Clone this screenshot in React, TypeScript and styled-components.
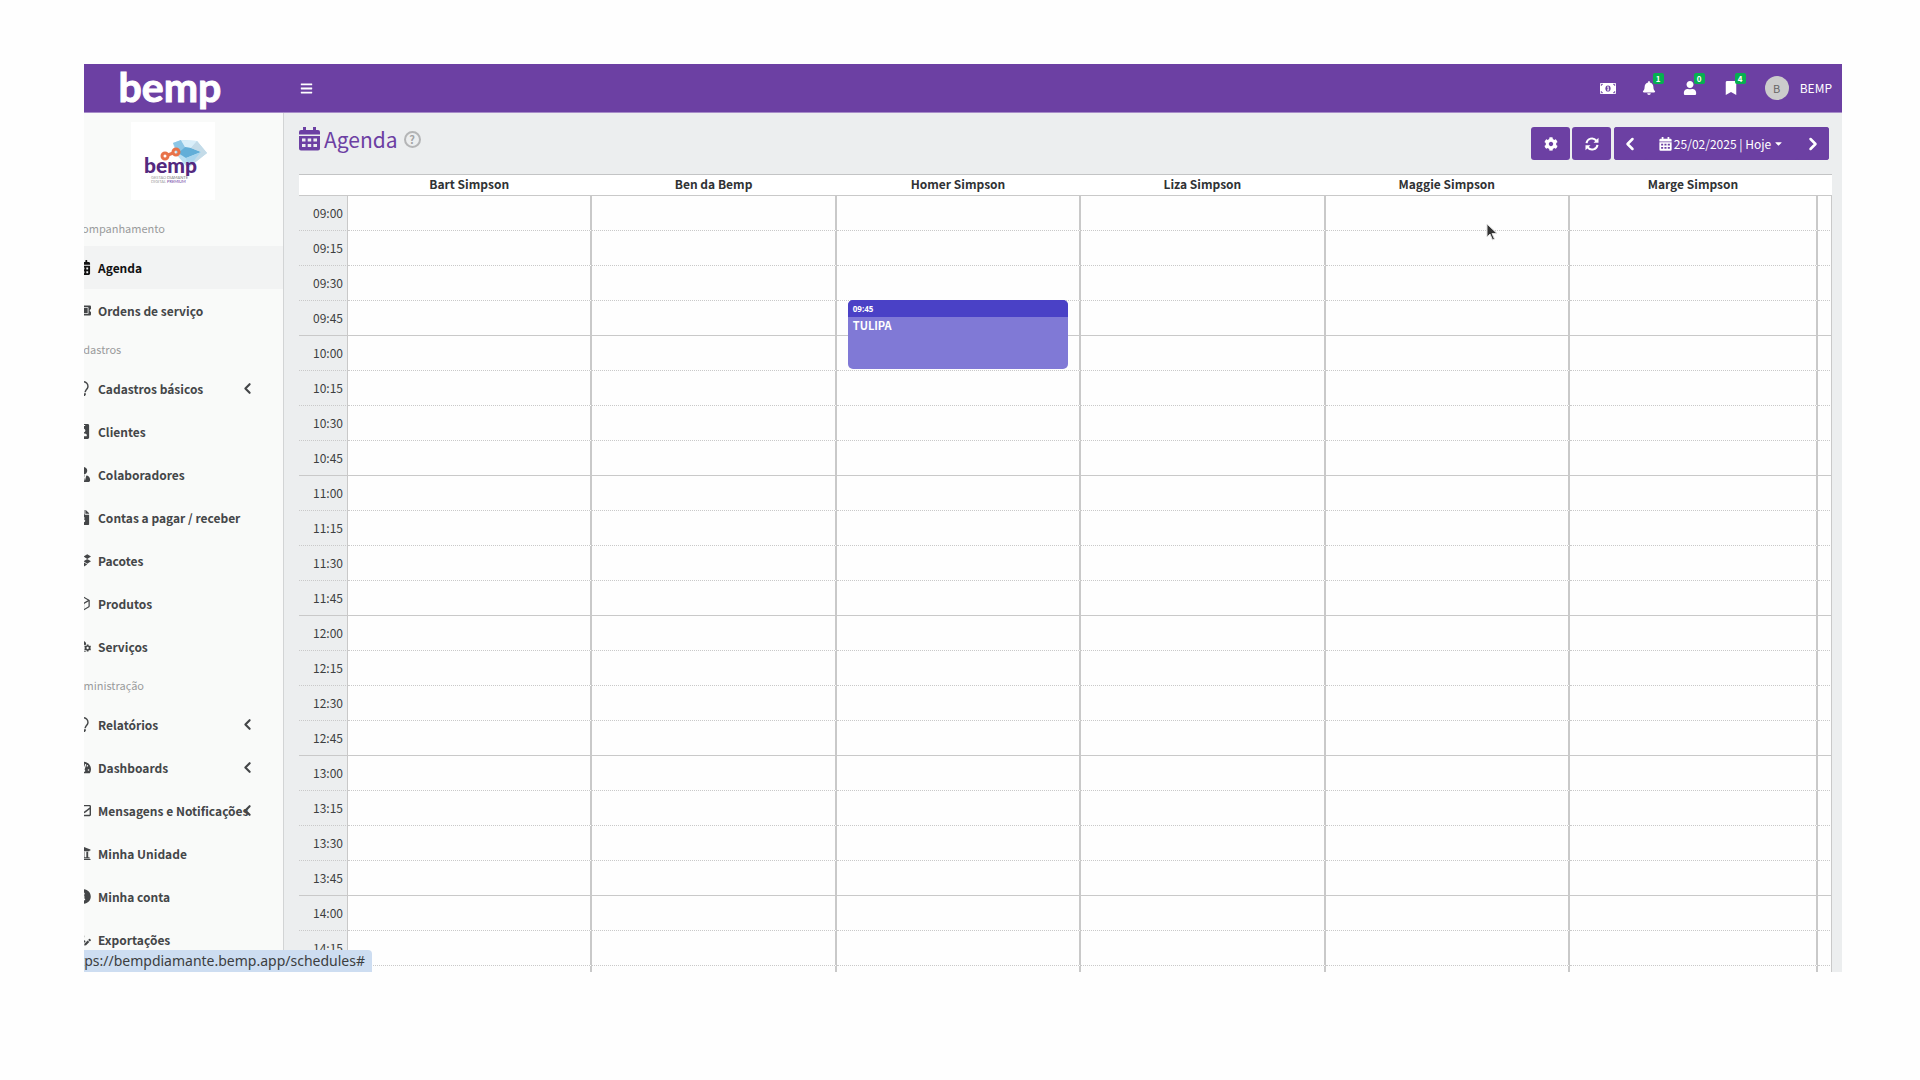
import React from "react";
import styled, { createGlobalStyle } from "styled-components";
import type { IconType } from "react-icons";
import {
  FaBars,
  FaBell,
  FaBookmark,
  FaCalendarAlt,
  FaCaretDown,
  FaCog,
  FaDropbox,
  FaFileInvoiceDollar,
  FaIdBadge,
  FaInfoCircle,
  FaRegEnvelope,
  FaRegLightbulb,
  FaTachometerAlt,
  FaTicketAlt,
  FaUniversity,
  FaUser,
  FaUserEdit,
  FaUserTie,
  FaUsersCog,
} from "react-icons/fa";
import { FiBox } from "react-icons/fi";
import { ChevronLeft, ChevronRight } from "lucide-react";

const purple = "#6c40a3";
const line = "#c9c9c9";
const surface = "#eceeef";

const GlobalStyle = createGlobalStyle`
  *, *::before, *::after { box-sizing: border-box; }
  body {
    margin: 0;
    background: #fefefe;
    color: #3c3e40;
    font-family: "Noto Sans CJK JP", "Noto Sans", sans-serif;
    font-size: 12px;
    line-height: 20px;
  }
  button {
    border: 0;
    padding: 0;
    background: none;
    color: inherit;
    font: inherit;
    cursor: pointer;
  }
  a { color: inherit; text-decoration: none; }
  ul { list-style: none; margin: 0; padding: 0; }
  svg { display: block; flex: none; }
`;

const Screen = styled.div`
  height: 100vh;
  padding: 64px 78px 108px 84px;
`;

const Window = styled.div`
  position: relative;
  display: flex;
  flex-direction: column;
  height: 100%;
  overflow: hidden;
`;

const TopBar = styled.header`
  display: flex;
  flex: none;
  align-items: center;
  height: 49px;
  padding-right: 10px;
  background: ${purple};
  border-bottom: 1px solid #a78cc9;
  color: #fff;
`;

const Brand = styled.a`
  width: 200px;
  padding: 0 28px 2px 0;
  text-align: center;
  font-family: Lato, sans-serif;
  font-weight: 700;
  font-size: 41px;
  line-height: 46px;
  -webkit-text-stroke: 1px #fff;
`;

const IconButton = styled.button`
  position: relative;
  display: flex;
  align-items: center;
  justify-content: center;
  width: 41px;
  height: 48px;
`;

const MenuButton = styled(IconButton)`
  width: 44px;
  margin-right: auto;
`;

const Badge = styled.span`
  position: absolute;
  top: 9px;
  right: 6px;
  min-width: 11px;
  height: 11px;
  border-radius: 2px;
  background: #06b050;
  font-weight: 700;
  font-size: 8px;
  line-height: 11px;
  text-align: center;
`;

const Account = styled.button`
  display: flex;
  align-items: center;
  gap: 11px;
  margin-left: 13px;
`;

const Avatar = styled.span`
  width: 24px;
  height: 24px;
  border-radius: 50%;
  background: #ccc;
  color: #666;
  font-size: 11px;
  line-height: 24px;
`;

const Body = styled.div`
  display: flex;
  flex: 1;
  min-height: 0;
`;

const Sidebar = styled.aside`
  flex: none;
  width: 200px;
  overflow: hidden;
  background: #f9faf9;
  border-right: 1px solid #d2d4d5;
`;

const LogoCard = styled.div`
  width: 84px;
  height: 78px;
  margin: 9px auto 11px 47px;
  background: #fff;
`;

const Nav = styled.nav`
  margin-left: -19px;
`;

const NavHeading = styled.h2`
  margin: 0;
  padding-left: 5px;
  color: #999b9c;
  font-weight: 400;
  font-size: 11px;
  line-height: 35px;
`;

const NavLink = styled.a<{ $active?: boolean }>`
  position: relative;
  display: flex;
  align-items: center;
  gap: 5px;
  height: 43px;
  padding-left: 8px;
  background: ${(p) => (p.$active ? "#f2f3f3" : "transparent")};
  color: ${(p) => (p.$active ? "#111" : "#444648")};
  font-weight: 700;
  white-space: nowrap;
`;

const NavIcon = styled.span`
  display: flex;
  justify-content: center;
  width: 20px;

  svg {
    width: auto;
    height: 15px;
  }
`;

const NavArrow = styled.span`
  position: absolute;
  right: 27px;
`;

const Main = styled.main`
  flex: 1;
  min-width: 0;
  overflow: hidden;
  padding: 14px 10px 0 15px;
  background: ${surface};
`;

const Toolbar = styled.div`
  display: flex;
  align-items: flex-start;
  gap: 2px;
  height: 47px;
  padding-right: 3px;
`;

const Title = styled.h1`
  display: flex;
  align-items: center;
  gap: 4px;
  margin: 0 auto 0 0;
  color: ${purple};
  font-weight: 400;
  font-size: 21px;
  line-height: 24px;
`;

const Help = styled.button`
  width: 17px;
  height: 17px;
  margin-left: 2px;
  border: 2px solid #b4b5b6;
  border-radius: 50%;
  color: #a3a4a5;
  font-weight: 700;
  font-size: 11px;
  line-height: 13px;
`;

const ToolButton = styled.button`
  display: flex;
  align-items: center;
  justify-content: center;
  width: 39px;
  height: 33px;
  border-radius: 3px;
  background: ${purple};
  color: #fff;
`;

const DateGroup = styled.div`
  display: flex;
  margin-left: 1px;
  border-radius: 3px;
  background: ${purple};
`;

const DateStep = styled(ToolButton)`
  width: 32px;
`;

const DateButton = styled(ToolButton)`
  gap: 2px;
  width: 151px;
`;

const Calendar = styled.table`
  width: 100%;
  table-layout: fixed;
  border-collapse: separate;
  border-spacing: 0;
`;

const HeadCell = styled.th`
  height: 21px;
  padding: 0 2px 2px 0;
  border-top: 1px solid #c3c4c5;
  background: #fff;
  color: #303234;
  line-height: 18px;
`;

const SlotRow = styled.tr<{ $hour: boolean }>`
  & > * {
    height: 35px;
    padding: 0;
    border-top: 1px ${(p) => (p.$hour ? "solid" : "dotted")} ${line};
  }
`;

const TimeCell = styled.th`
  border-right: 1px solid ${line};
  font-weight: 400;
  text-align: right;

  && {
    padding-right: 4px;
  }
`;

const Slot = styled.td`
  position: relative;
  border-right: 2px solid ${line};
  background: #fefefe;

  &:last-child {
    border-right-width: 1px;
  }
`;

const Appointment = styled.button`
  position: absolute;
  top: -1px;
  left: 11px;
  right: 11px;
  z-index: 1;
  display: flex;
  flex-direction: column;
  height: 69px;
  overflow: hidden;
  border-radius: 5px;
  background: #8079d6;
  color: #fff;
  font-weight: 700;
  font-size: 11px;
  text-align: left;
`;

const AppointmentTime = styled.span`
  width: 100%;
  padding-left: 5px;
  background: #4a41c6;
  font-family: "Open Sans", sans-serif;
  font-size: 8px;
  line-height: 17px;
`;

const AppointmentName = styled.span`
  padding-left: 5px;
  line-height: 16px;
`;

const StatusBar = styled.div`
  position: absolute;
  bottom: 0;
  left: 0;
  z-index: 2;
  display: flex;
  justify-content: flex-end;
  width: 288px;
  overflow: hidden;
  padding-right: 7px;
  border-top-right-radius: 4px;
  background: #cdddf1;
  font-family: "Noto Sans", sans-serif;
  font-size: 14px;
  line-height: 22px;
`;

const Pointer = styled.svg`
  position: absolute;
  top: 159px;
  left: 1402px;
  z-index: 3;
`;

const DiamondLogo = () => (
  <svg width="84" height="78" viewBox="0 0 84 78" role="img" aria-label="bemp diamante">
    <path d="M42 21 50 18 66 19 76 31 57 46 45 32Z" fill="#b9dff2" />
    <path d="M42 21 50 18 54 25 47 31Z" fill="#8cc6e6" />
    <path d="M50 18 66 19 60 26 54 25Z" fill="#d9eef9" />
    <path d="M54 25 60 26 70 30 55 36 47 31Z" fill="#62aed8" />
    <path d="M55 36 70 30 57 46Z" fill="#a9d5ee" />
    <path d="M66 19 76 31 57 46 70 30 60 26Z" fill="#c4dbe8" />
    <g fill="none" stroke="#e8734a" strokeWidth="3">
      <circle cx="34" cy="34" r="3" />
      <circle cx="45" cy="30" r="3" />
      <path d="M37 33 42 31" />
    </g>
    <text x="13" y="51" fill="#54297f" fontFamily="Lato, sans-serif" fontWeight="900" fontSize="21">
      bemp
    </text>
    <g fontFamily="Lato, sans-serif" fontSize="4">
      <text x="20" y="57" fill="#999">GESTÃO</text>
      <text x="20" y="61" fill="#999">DIGITAL</text>
      <text x="36" y="57" fill="#777">DIAMANTE</text>
      <text x="36" y="61" fill="#6c40a3">PREMIUM</text>
    </g>
  </svg>
);

const MoneyIcon = () => (
  <svg width="16" height="11" viewBox="0 0 16 11">
    <rect width="16" height="11" rx="1" fill="#fff" />
    <ellipse cx="8" cy="5.5" rx="2.6" ry="3.1" fill={purple} />
    <path d="M7.2 4.2 8.2 3.7v3.2M7 7h2.2" stroke="#fff" fill="none" />
    <path d="M1.3 2.8V1.3h1.5M13.2 1.3h1.5v1.5M1.3 8.2v1.5h1.5M13.2 9.7h1.5V8.2" stroke={purple} fill="none" />
  </svg>
);

const CalendarIcon = ({ width, height }: { width: number; height: number }) => (
  <svg width={width} height={height} viewBox="0 0 21 24" fill="currentColor">
    <path
      fillRule="evenodd"
      d="M0 9h21v12.500a2 2 0 0 1-2 2H2a2 2 0 0 1-2-2ZM3 11.500v3h3.500v-3Zm5.700 0v3h3.500v-3Zm5.700 0v3H18v-3ZM3 17v3h3.500v-3Zm5.700 0v3h3.500v-3Zm5.700 0v3H18v-3Z"
    />
    <path d="M4 0h3v3h7V0h3v3h2a2 2 0 0 1 2 2v2.500H0V5a2 2 0 0 1 2-2h2Z" />
  </svg>
);

const RefreshIcon = () => (
  <svg width="14" height="14" viewBox="0 0 14 14" fill="none" stroke="currentColor" strokeWidth="2">
    <path d="M1.500 6.200A5.500 5.500 0 0 1 11.300 3.600M12.500 7.800A5.500 5.500 0 0 1 2.700 10.400" />
    <path d="M13.500.8v5h-5Z M.5 13.200v-5h5Z" fill="currentColor" stroke="none" />
  </svg>
);

type Item = { label: string; icon: IconType; active?: boolean; nested?: boolean };

const menu: { heading: string; items: Item[] }[] = [
  {
    heading: "Acompanhamento",
    items: [
      { label: "Agenda", icon: FaCalendarAlt, active: true },
      { label: "Ordens de serviço", icon: FaTicketAlt },
    ],
  },
  {
    heading: "Cadastros",
    items: [
      { label: "Cadastros básicos", icon: FaRegLightbulb, nested: true },
      { label: "Clientes", icon: FaIdBadge },
      { label: "Colaboradores", icon: FaUserTie },
      { label: "Contas a pagar / receber", icon: FaFileInvoiceDollar },
      { label: "Pacotes", icon: FaDropbox },
      { label: "Produtos", icon: FiBox },
      { label: "Serviços", icon: FaUsersCog },
    ],
  },
  {
    heading: "Administração",
    items: [
      { label: "Relatórios", icon: FaRegLightbulb, nested: true },
      { label: "Dashboards", icon: FaTachometerAlt, nested: true },
      { label: "Mensagens e Notificações", icon: FaRegEnvelope, nested: true },
      { label: "Minha Unidade", icon: FaUniversity },
      { label: "Minha conta", icon: FaInfoCircle },
      { label: "Exportações", icon: FaUserEdit },
    ],
  },
];

const alerts = [
  { label: "Notificações", icon: FaBell, count: 1 },
  { label: "Clientes", icon: FaUser, count: 0 },
  { label: "Marcadores", icon: FaBookmark, count: 4 },
];

const people = ["Bart Simpson", "Ben da Bemp", "Homer Simpson", "Liza Simpson", "Maggie Simpson", "Marge Simpson"];

const slots = Array.from({ length: 24 }, (_, i) => {
  const minutes = 9 * 60 + i * 15;
  return `${String(Math.floor(minutes / 60)).padStart(2, "0")}:${String(minutes % 60).padStart(2, "0")}`;
});

const appointments = [{ time: "09:45", person: "Homer Simpson", name: "TULIPA" }];

export default function App() {
  return (
    <Screen>
      <GlobalStyle />
      <Window>
        <TopBar>
          <Brand href="#">bemp</Brand>
          <MenuButton aria-label="Menu">
            <FaBars size={13} />
          </MenuButton>
          <IconButton aria-label="Caixa">
            <MoneyIcon />
          </IconButton>
          {alerts.map(({ label, icon: Icon, count }) => (
            <IconButton key={label} aria-label={label}>
              <Icon size={14} />
              <Badge>{count}</Badge>
            </IconButton>
          ))}
          <Account>
            <Avatar>B</Avatar>
            BEMP
          </Account>
        </TopBar>
        <Body>
          <Sidebar>
            <LogoCard>
              <DiamondLogo />
            </LogoCard>
            <Nav>
              {menu.map(({ heading, items }) => (
                <section key={heading}>
                  <NavHeading>{heading}</NavHeading>
                  <ul>
                    {items.map(({ label, icon: Icon, active, nested }) => (
                      <li key={label}>
                        <NavLink href="#" $active={active}>
                          <NavIcon>
                            <Icon />
                          </NavIcon>
                          {label}
                          {nested && (
                            <NavArrow>
                              <ChevronLeft size={17} strokeWidth={3} />
                            </NavArrow>
                          )}
                        </NavLink>
                      </li>
                    ))}
                  </ul>
                </section>
              ))}
            </Nav>
          </Sidebar>
          <Main>
            <Toolbar>
              <Title>
                <CalendarIcon width={21} height={24} />
                Agenda
                <Help aria-label="Ajuda">?</Help>
              </Title>
              <ToolButton aria-label="Configurações">
                <FaCog size={14} />
              </ToolButton>
              <ToolButton aria-label="Atualizar">
                <RefreshIcon />
              </ToolButton>
              <DateGroup>
                <DateStep aria-label="Dia anterior">
                  <ChevronLeft size={20} strokeWidth={3} />
                </DateStep>
                <DateButton>
                  <CalendarIcon width={13} height={14} />
                  25/02/2025 | Hoje
                  <FaCaretDown size={11} />
                </DateButton>
                <DateStep aria-label="Próximo dia">
                  <ChevronRight size={20} strokeWidth={3} />
                </DateStep>
              </DateGroup>
            </Toolbar>
            <Calendar>
              <colgroup>
                <col width="49" />
                {people.map((person, i) => (
                  <col key={person} width={i === people.length - 1 ? 248 : undefined} />
                ))}
                <col width="14" />
              </colgroup>
              <thead>
                <tr>
                  <HeadCell />
                  {people.map((person) => (
                    <HeadCell key={person} scope="col">
                      {person}
                    </HeadCell>
                  ))}
                  <HeadCell />
                </tr>
              </thead>
              <tbody>
                {slots.map((time, i) => (
                  <SlotRow key={time} $hour={i % 4 === 0}>
                    <TimeCell scope="row">{time}</TimeCell>
                    {people.map((person) => (
                      <Slot key={person}>
                        {appointments
                          .filter((a) => a.time === time && a.person === person)
                          .map((a) => (
                            <Appointment key={a.name}>
                              <AppointmentTime>{a.time}</AppointmentTime>
                              <AppointmentName>{a.name}</AppointmentName>
                            </Appointment>
                          ))}
                      </Slot>
                    ))}
                    <Slot />
                  </SlotRow>
                ))}
              </tbody>
            </Calendar>
          </Main>
        </Body>
        <StatusBar>https://bempdiamante.bemp.app/schedules#</StatusBar>
        <Pointer width="12" height="18" viewBox="0 0 12 18" aria-hidden="true">
          <path d="M1 1v13l3-3 2.500 6 2-1-2.500-5.500H11Z" fill="#333" stroke="#ddd" />
        </Pointer>
      </Window>
    </Screen>
  );
}
